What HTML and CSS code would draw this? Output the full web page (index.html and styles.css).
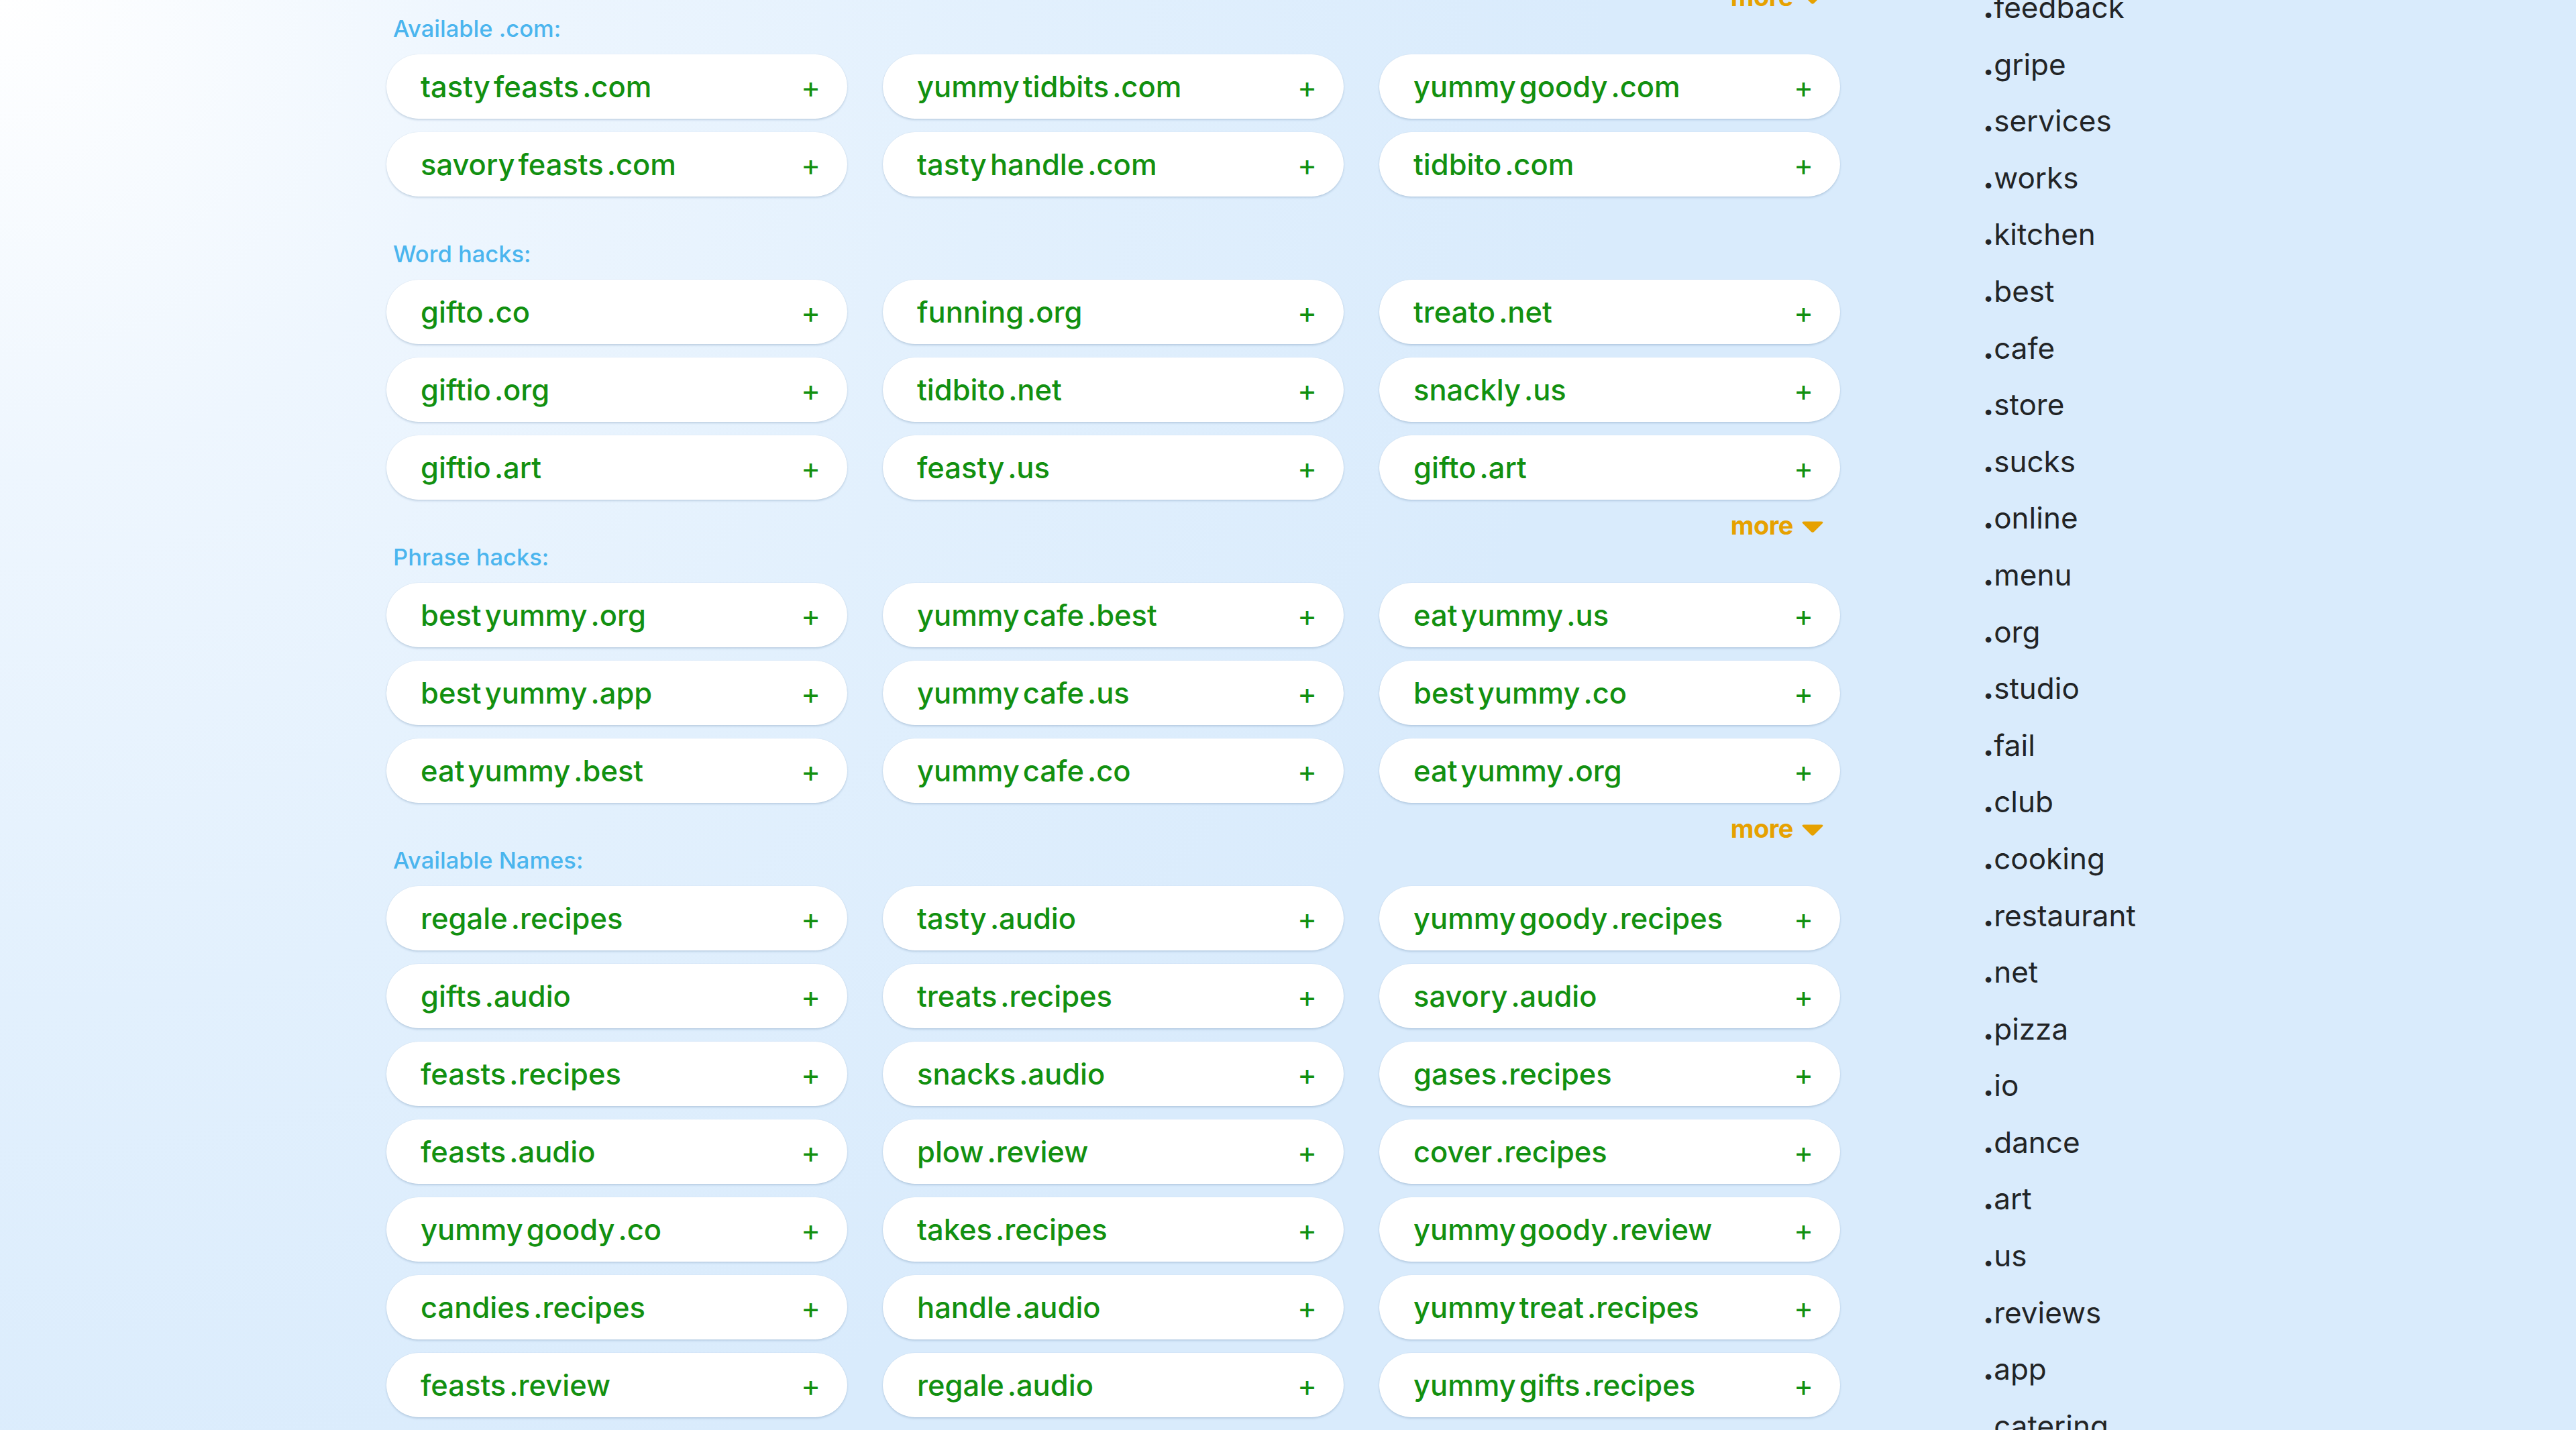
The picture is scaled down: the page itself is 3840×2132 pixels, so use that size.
FILE: index.html
```html
<!DOCTYPE html>
<html lang="en">
<head>
<meta charset="utf-8">
<title>Domain names</title>
<link rel="stylesheet" href="styles.css">
</head>
<body>
<div class="page">
  <main class="results">
    <div class="more-row lead"><a class="more">more <svg class="tri" viewBox="0 0 34 19" width="34" height="19"><path d="M4 1.5 H30 Q34 1.5 31.5 4.5 L19.5 16.5 Q17 19 14.5 16.5 L2.5 4.5 Q0 1.5 4 1.5 Z"/></svg></a></div>

    <section class="group">
      <h3 class="group-title">Available .com:</h3>
      <div class="grid">
        <div class="pill"><span class="name"><span>tasty</span><span>feasts</span><span>.com</span></span><span class="add">+</span></div>
        <div class="pill"><span class="name"><span>yummy</span><span>tidbits</span><span>.com</span></span><span class="add">+</span></div>
        <div class="pill"><span class="name"><span>yummy</span><span>goody</span><span>.com</span></span><span class="add">+</span></div>
        <div class="pill"><span class="name"><span>savory</span><span>feasts</span><span>.com</span></span><span class="add">+</span></div>
        <div class="pill"><span class="name"><span>tasty</span><span>handle</span><span>.com</span></span><span class="add">+</span></div>
        <div class="pill"><span class="name"><span>tidbito</span><span>.com</span></span><span class="add">+</span></div>
      </div>
      <div class="more-row"></div>
    </section>

    <section class="group">
      <h3 class="group-title">Word hacks:</h3>
      <div class="grid">
        <div class="pill"><span class="name"><span>gifto</span><span>.co</span></span><span class="add">+</span></div>
        <div class="pill"><span class="name"><span>funning</span><span>.org</span></span><span class="add">+</span></div>
        <div class="pill"><span class="name"><span>treato</span><span>.net</span></span><span class="add">+</span></div>
        <div class="pill"><span class="name"><span>giftio</span><span>.org</span></span><span class="add">+</span></div>
        <div class="pill"><span class="name"><span>tidbito</span><span>.net</span></span><span class="add">+</span></div>
        <div class="pill"><span class="name"><span>snackly</span><span>.us</span></span><span class="add">+</span></div>
        <div class="pill"><span class="name"><span>giftio</span><span>.art</span></span><span class="add">+</span></div>
        <div class="pill"><span class="name"><span>feasty</span><span>.us</span></span><span class="add">+</span></div>
        <div class="pill"><span class="name"><span>gifto</span><span>.art</span></span><span class="add">+</span></div>
      </div>
      <div class="more-row"><a class="more">more <svg class="tri" viewBox="0 0 34 19" width="34" height="19"><path d="M4 1.5 H30 Q34 1.5 31.5 4.5 L19.5 16.5 Q17 19 14.5 16.5 L2.5 4.5 Q0 1.5 4 1.5 Z"/></svg></a></div>
    </section>

    <section class="group">
      <h3 class="group-title">Phrase hacks:</h3>
      <div class="grid">
        <div class="pill"><span class="name"><span>best</span><span>yummy</span><span>.org</span></span><span class="add">+</span></div>
        <div class="pill"><span class="name"><span>yummy</span><span>cafe</span><span>.best</span></span><span class="add">+</span></div>
        <div class="pill"><span class="name"><span>eat</span><span>yummy</span><span>.us</span></span><span class="add">+</span></div>
        <div class="pill"><span class="name"><span>best</span><span>yummy</span><span>.app</span></span><span class="add">+</span></div>
        <div class="pill"><span class="name"><span>yummy</span><span>cafe</span><span>.us</span></span><span class="add">+</span></div>
        <div class="pill"><span class="name"><span>best</span><span>yummy</span><span>.co</span></span><span class="add">+</span></div>
        <div class="pill"><span class="name"><span>eat</span><span>yummy</span><span>.best</span></span><span class="add">+</span></div>
        <div class="pill"><span class="name"><span>yummy</span><span>cafe</span><span>.co</span></span><span class="add">+</span></div>
        <div class="pill"><span class="name"><span>eat</span><span>yummy</span><span>.org</span></span><span class="add">+</span></div>
      </div>
      <div class="more-row"><a class="more">more <svg class="tri" viewBox="0 0 34 19" width="34" height="19"><path d="M4 1.5 H30 Q34 1.5 31.5 4.5 L19.5 16.5 Q17 19 14.5 16.5 L2.5 4.5 Q0 1.5 4 1.5 Z"/></svg></a></div>
    </section>

    <section class="group">
      <h3 class="group-title">Available Names:</h3>
      <div class="grid">
        <div class="pill"><span class="name"><span>regale</span><span>.recipes</span></span><span class="add">+</span></div>
        <div class="pill"><span class="name"><span>tasty</span><span>.audio</span></span><span class="add">+</span></div>
        <div class="pill"><span class="name"><span>yummy</span><span>goody</span><span>.recipes</span></span><span class="add">+</span></div>
        <div class="pill"><span class="name"><span>gifts</span><span>.audio</span></span><span class="add">+</span></div>
        <div class="pill"><span class="name"><span>treats</span><span>.recipes</span></span><span class="add">+</span></div>
        <div class="pill"><span class="name"><span>savory</span><span>.audio</span></span><span class="add">+</span></div>
        <div class="pill"><span class="name"><span>feasts</span><span>.recipes</span></span><span class="add">+</span></div>
        <div class="pill"><span class="name"><span>snacks</span><span>.audio</span></span><span class="add">+</span></div>
        <div class="pill"><span class="name"><span>gases</span><span>.recipes</span></span><span class="add">+</span></div>
        <div class="pill"><span class="name"><span>feasts</span><span>.audio</span></span><span class="add">+</span></div>
        <div class="pill"><span class="name"><span>plow</span><span>.review</span></span><span class="add">+</span></div>
        <div class="pill"><span class="name"><span>cover</span><span>.recipes</span></span><span class="add">+</span></div>
        <div class="pill"><span class="name"><span>yummy</span><span>goody</span><span>.co</span></span><span class="add">+</span></div>
        <div class="pill"><span class="name"><span>takes</span><span>.recipes</span></span><span class="add">+</span></div>
        <div class="pill"><span class="name"><span>yummy</span><span>goody</span><span>.review</span></span><span class="add">+</span></div>
        <div class="pill"><span class="name"><span>candies</span><span>.recipes</span></span><span class="add">+</span></div>
        <div class="pill"><span class="name"><span>handle</span><span>.audio</span></span><span class="add">+</span></div>
        <div class="pill"><span class="name"><span>yummy</span><span>treat</span><span>.recipes</span></span><span class="add">+</span></div>
        <div class="pill"><span class="name"><span>feasts</span><span>.review</span></span><span class="add">+</span></div>
        <div class="pill"><span class="name"><span>regale</span><span>.audio</span></span><span class="add">+</span></div>
        <div class="pill"><span class="name"><span>yummy</span><span>gifts</span><span>.recipes</span></span><span class="add">+</span></div>
      </div>
    </section>
  </main>

  <aside class="tlds">
    <ul class="tld-list">
      <li><b>.</b>feedback</li>
      <li><b>.</b>gripe</li>
      <li><b>.</b>services</li>
      <li><b>.</b>works</li>
      <li><b>.</b>kitchen</li>
      <li><b>.</b>best</li>
      <li><b>.</b>cafe</li>
      <li><b>.</b>store</li>
      <li><b>.</b>sucks</li>
      <li><b>.</b>online</li>
      <li><b>.</b>menu</li>
      <li><b>.</b>org</li>
      <li><b>.</b>studio</li>
      <li><b>.</b>fail</li>
      <li><b>.</b>club</li>
      <li><b>.</b>cooking</li>
      <li><b>.</b>restaurant</li>
      <li><b>.</b>net</li>
      <li><b>.</b>pizza</li>
      <li><b>.</b>io</li>
      <li><b>.</b>dance</li>
      <li><b>.</b>art</li>
      <li><b>.</b>us</li>
      <li><b>.</b>reviews</li>
      <li><b>.</b>app</li>
      <li><b>.</b>catering</li>
    </ul>
  </aside>
</div>
</body>
</html>
```

FILE: styles.css
```css
html, body {
  margin: 0;
  padding: 0;
}

body {
  width: 3840px;
  height: 2132px;
  overflow: hidden;
  font-family: Inter, "Noto Sans", "Liberation Sans", sans-serif;
  background: radial-gradient(circle at 0 0, #ffffff 0, #eef6fe 700px, #e2f0fd 1500px, #d9ebfc 2400px);
  background-color: #d9ebfc;
}

.page {
  display: flex;
  align-items: flex-start;
  padding-left: 576px;
}

.results {
  width: 2167px;
  flex: none;
}

.more-row {
  height: 64px;
  box-sizing: border-box;
  padding-top: 12px;
  padding-right: 24px;
  display: flex;
  justify-content: flex-end;
  align-items: center;
}

.more-row.lead {
  margin-top: -43px;
}

.more {
  display: flex;
  align-items: center;
  gap: 12px;
  color: #e6a100;
  font-weight: 700;
  font-size: 38px;
  line-height: 52px;
  letter-spacing: -0.5px;
}

.tri {
  fill: #e6a100;
  margin-top: 4px;
}

.group-title {
  margin: 2px 0 18px 10px;
  font-size: 34.5px;
  line-height: 40px;
  font-weight: 500;
  color: #4bb5ee;
}

.grid {
  display: grid;
  grid-template-columns: repeat(3, 687px);
  column-gap: 53px;
  row-gap: 20px;
}

.pill {
  height: 96px;
  border-radius: 48px;
  background: #ffffff;
  box-shadow: 0 2px 3px rgba(60, 100, 140, 0.22), 0 0 1px rgba(60, 100, 140, 0.18);
  display: flex;
  align-items: center;
  justify-content: space-between;
  padding: 0 40px 0 51px;
  box-sizing: border-box;
  color: #129010;
  font-size: 43.5px;
  font-weight: 500;
}

.name span + span {
  margin-left: 5px;
}

.add {
  font-size: 44px;
  font-weight: 400;
  line-height: 1;
  margin-top: 2px;
}

.tlds {
  margin-left: 213px;
  flex: none;
}

.tld-list {
  list-style: none;
  margin: -31px 0 0 0;
  padding: 0;
  font-size: 44px;
  line-height: 84.6px;
  color: #222426;
}

.tld-list li {
  height: 84.6px;
}

.tld-list b {
  font-weight: 800;
  font-size: 46px;
  line-height: 1;
}
```
